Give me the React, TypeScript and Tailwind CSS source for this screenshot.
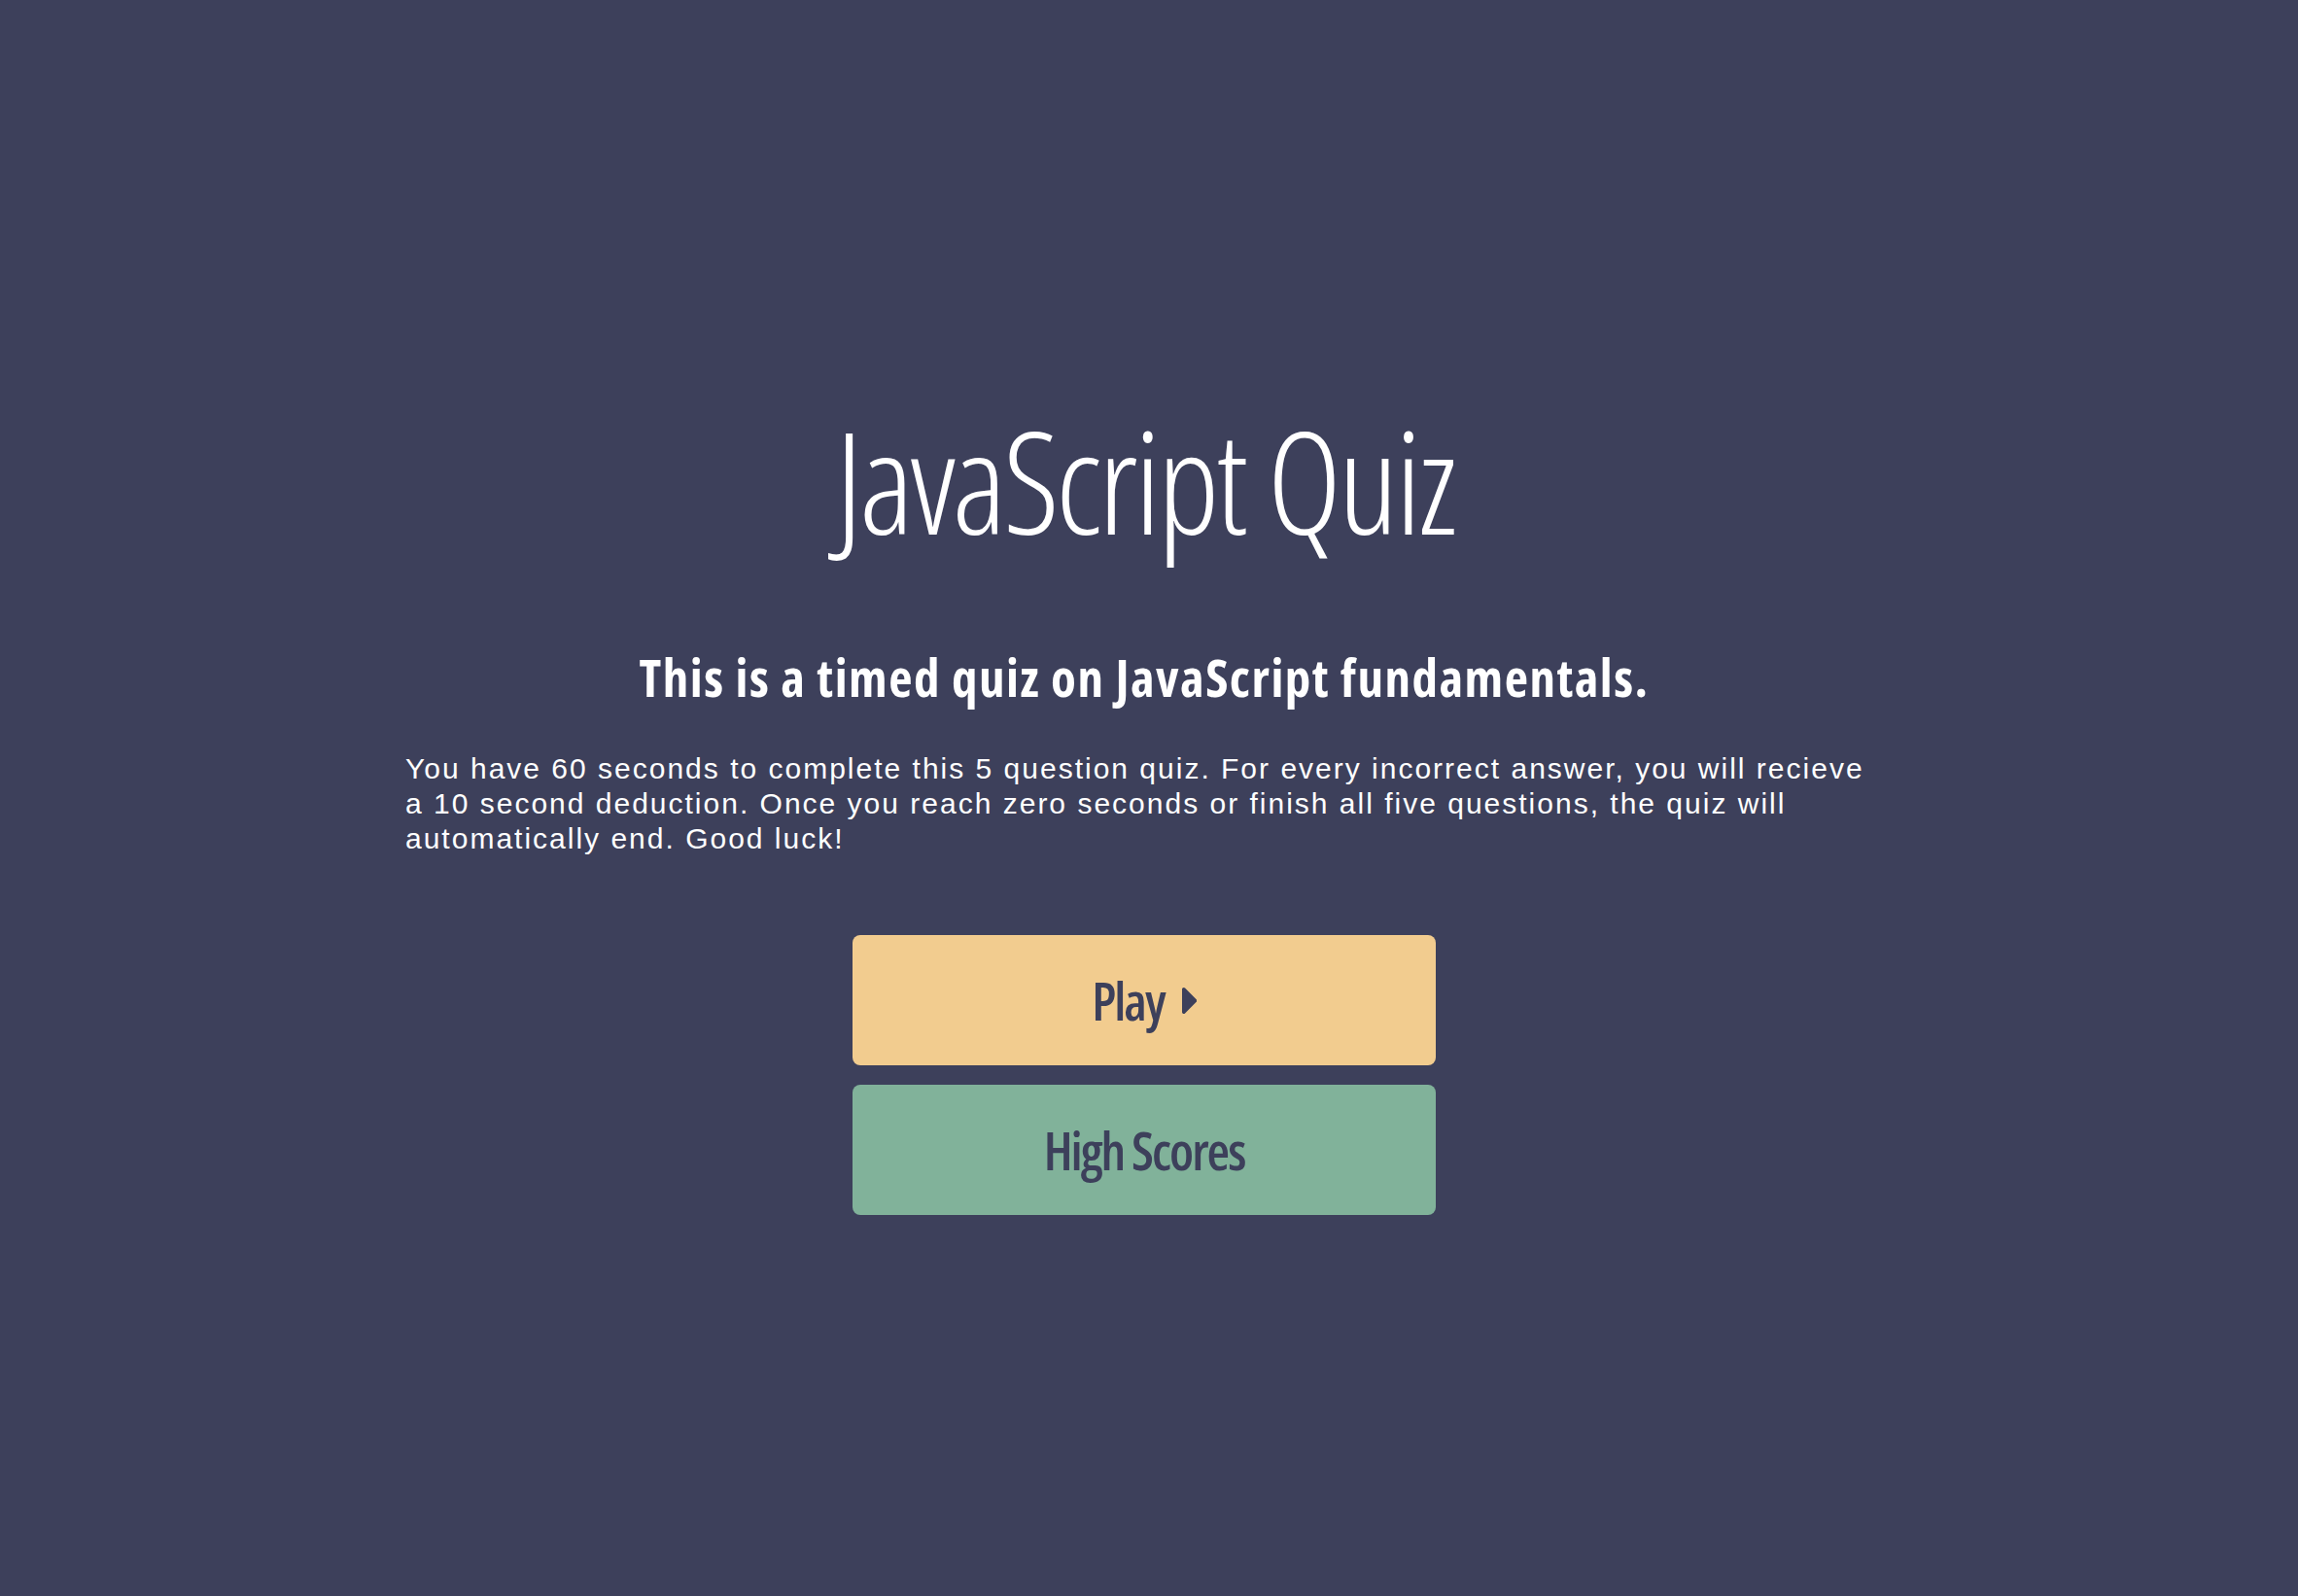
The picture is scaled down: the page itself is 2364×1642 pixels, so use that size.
import React from "react";

function Caret() {
  return (
    <svg
      viewBox="0 110 166 292"
      className="w-[15px] h-[27px] fill-[#3d405b]"
      aria-hidden="true"
    >
      <path d="M0 384.662V127.338c0-17.818 21.543-26.741 34.142-14.142l128.662 128.662c7.81 7.81 7.81 20.474 0 28.284L34.142 398.804C21.543 411.404 0 402.48 0 384.662z" />
    </svg>
  );
}

export default function App() {
  return (
    <div className="min-h-screen w-full bg-[#3d405b] text-white">
      <div className="pt-[421px] pb-[200px] pr-[10px] flex flex-col items-center">
        <h1 className="text-[145px] leading-none font-light tracking-[-3.5px] font-['Open_Sans',sans-serif] font-stretch-[75%] text-center">
          JavaScript Quiz
        </h1>
        <h2 className="mt-[104px] text-[53px] leading-none font-bold tracking-[1.5px] font-['Open_Sans',sans-serif] font-stretch-[75%] text-center">
          This is a timed quiz on JavaScript fundamentals.
        </h2>
        <p className="mt-[50px] w-[1520px] text-[30px] leading-[36px] tracking-[2px] font-['Liberation_Sans',Arial,sans-serif]">
          You have 60 seconds to complete this 5 question quiz. For every
          incorrect answer, you will recieve a 10 second deduction. Once you
          reach zero seconds or finish all five questions, the quiz will
          automatically end. Good luck!
        </p>
        <div className="mt-[81px] flex flex-col gap-[20px]">
          <button className="w-[600px] h-[134px] rounded-[8px] bg-[#f2cc8f] text-[#3d405b] flex items-center justify-center gap-[18px] font-['Open_Sans',sans-serif] font-stretch-[75%] font-semibold tracking-[-2px] text-[54px] leading-none">
            <span>Play</span>
            <Caret />
          </button>
          <button className="w-[600px] h-[134px] rounded-[8px] bg-[#81b29a] text-[#3d405b] flex items-center justify-center font-['Open_Sans',sans-serif] font-stretch-[75%] font-semibold tracking-[-2px] text-[54px] leading-none">
            High Scores
          </button>
        </div>
      </div>
    </div>
  );
}
